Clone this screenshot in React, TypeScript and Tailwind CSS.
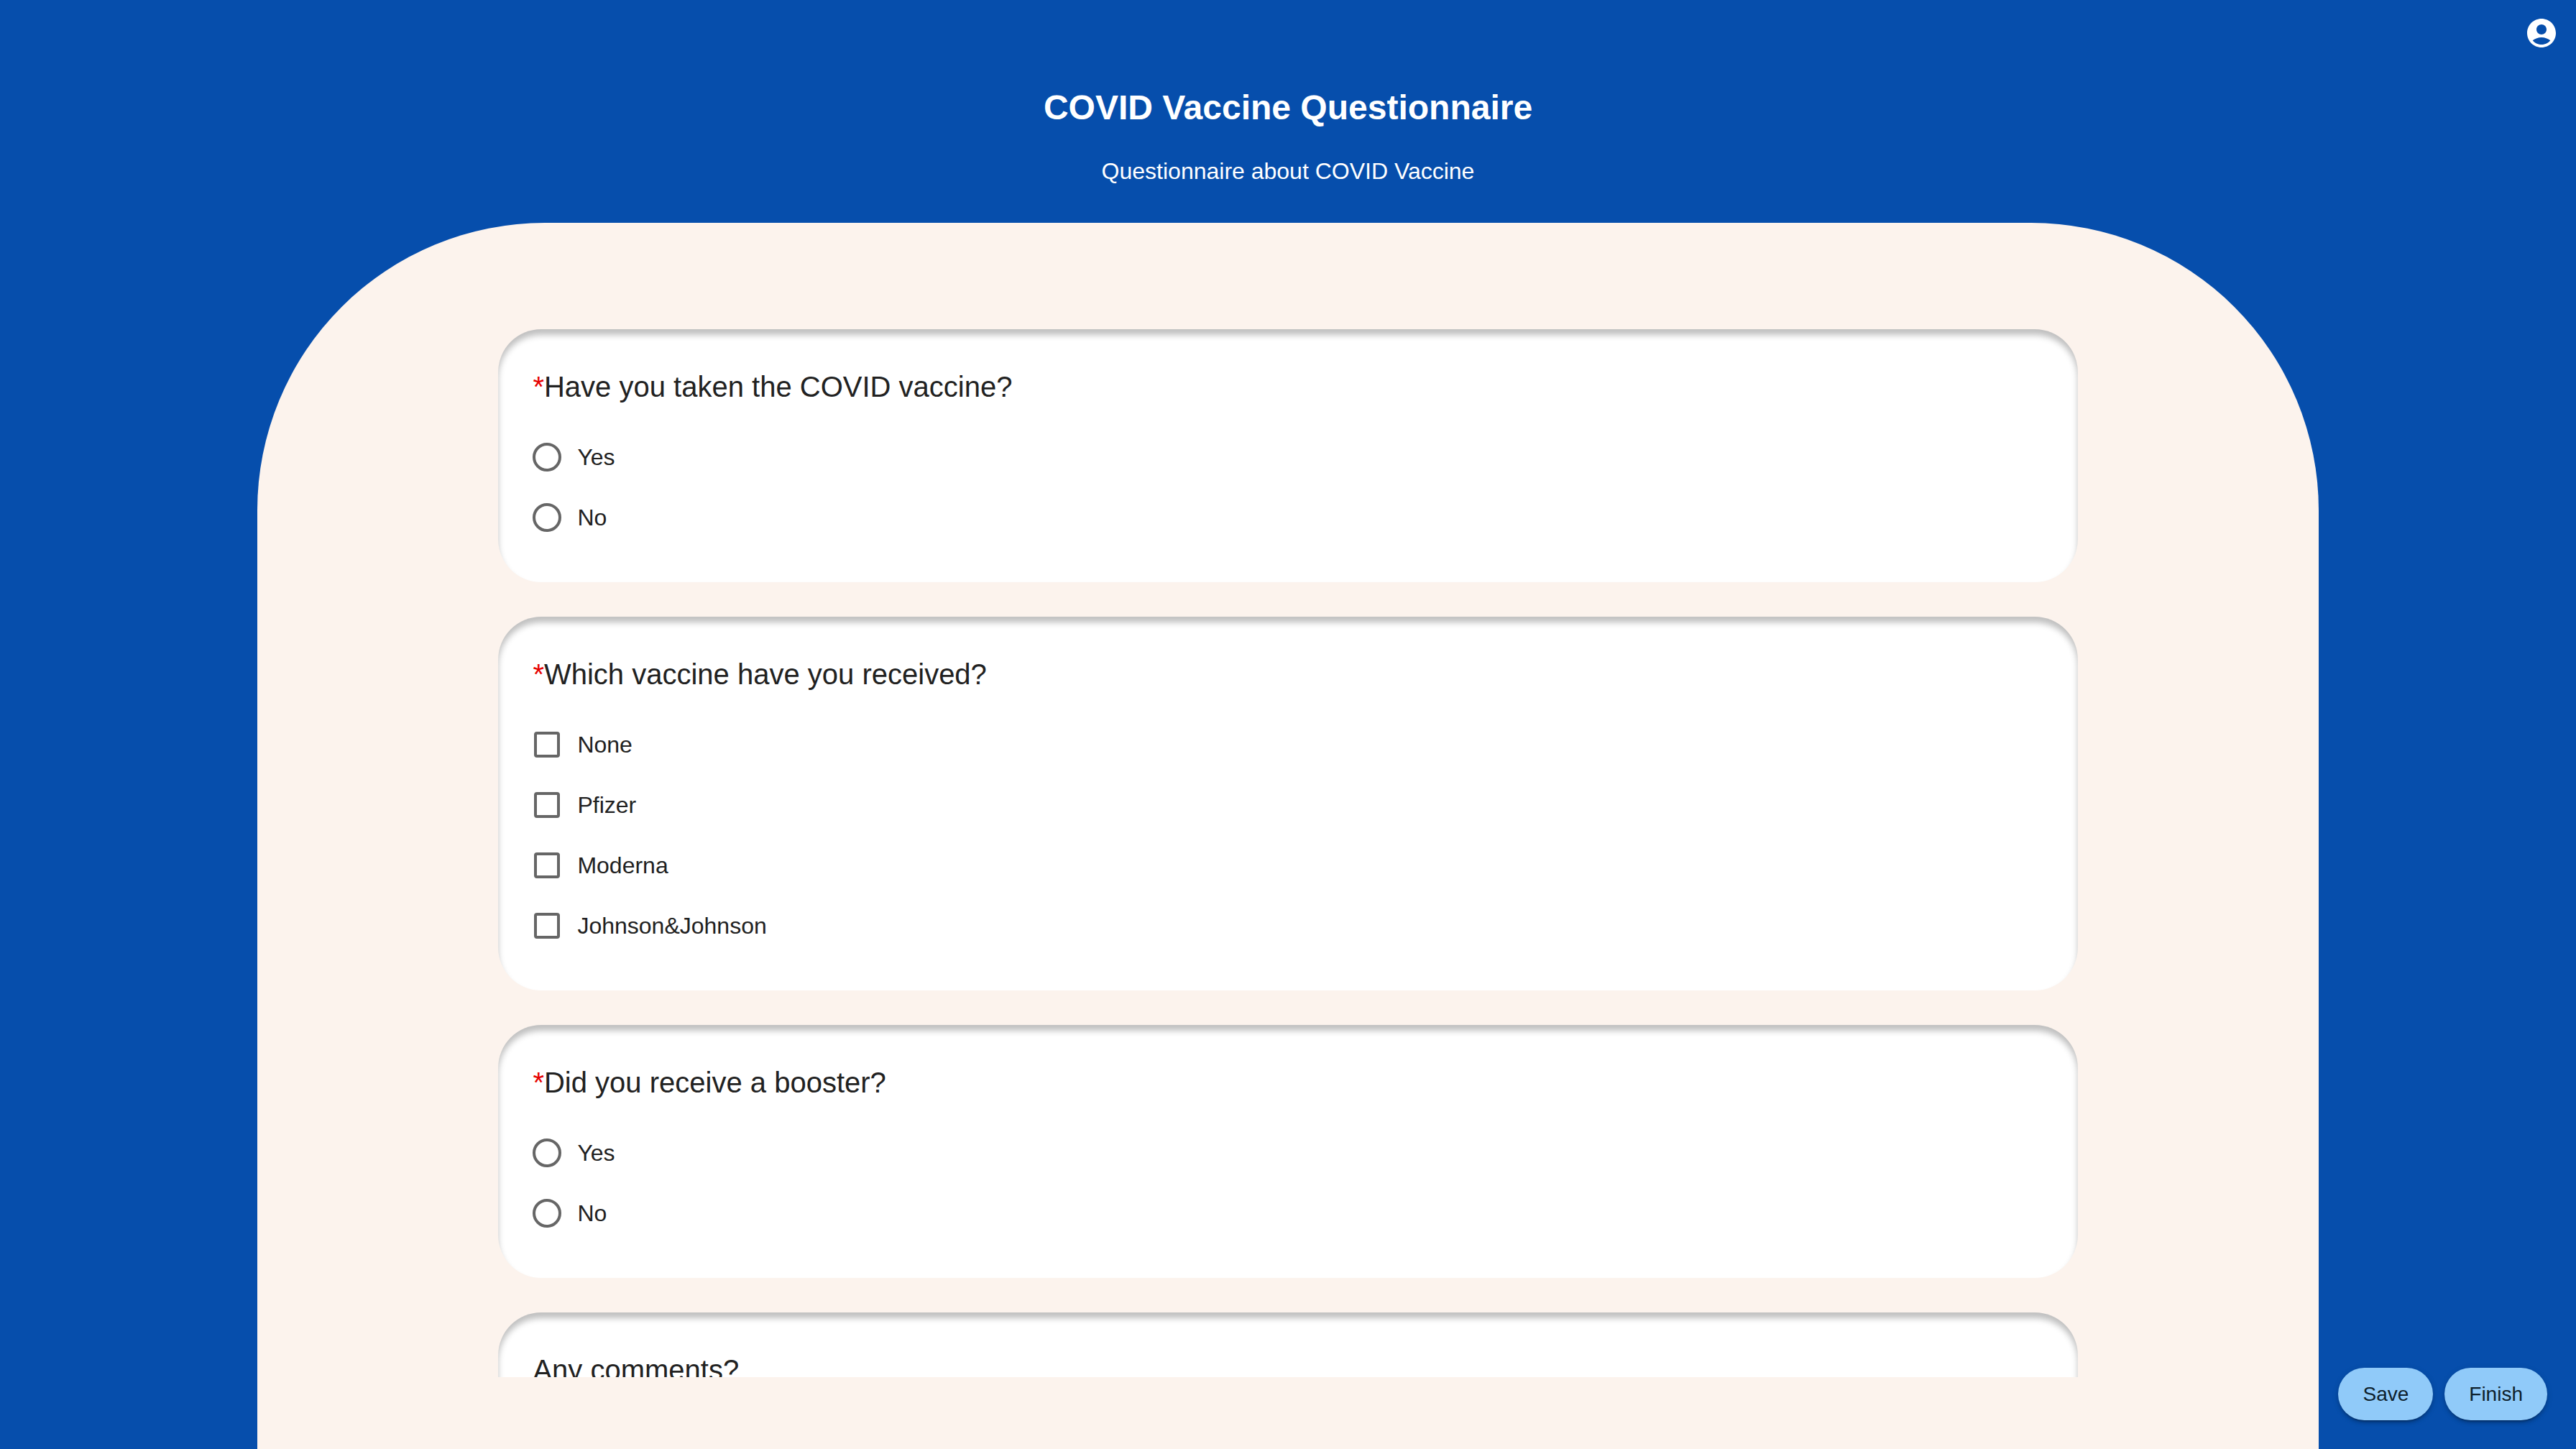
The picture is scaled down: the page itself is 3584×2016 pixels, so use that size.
import React from "react";

type Question = {
  id: string;
  title: string;
  required?: boolean;
  kind: "radio" | "checkbox" | "text";
  options?: string[];
};

const questions: Question[] = [
  { id: "taken", title: "Have you taken the COVID vaccine?", required: true, kind: "radio", options: ["Yes", "No"] },
  {
    id: "which",
    title: "Which vaccine have you received?",
    required: true,
    kind: "checkbox",
    options: ["None", "Pfizer", "Moderna", "Johnson&Johnson"],
  },
  { id: "booster", title: "Did you receive a booster?", required: true, kind: "radio", options: ["Yes", "No"] },
  { id: "comments", title: "Any comments?", kind: "text" },
];

function AccountIcon() {
  return (
    <svg viewBox="0 0 24 24" className="size-12" fill="currentColor" aria-hidden="true">
      <path d="M12 2C6.48 2 2 6.48 2 12s4.48 10 10 10 10-4.48 10-10S17.52 2 12 2m0 4c1.93 0 3.5 1.57 3.5 3.5S13.93 13 12 13s-3.5-1.57-3.5-3.5S10.07 6 12 6m0 14c-2.03 0-4.43-.82-6.14-2.88C7.55 15.8 9.68 15 12 15s4.45.8 6.14 2.12C16.43 19.18 14.03 20 12 20" />
    </svg>
  );
}

function Option({ name, kind, label }: { name: string; kind: "radio" | "checkbox"; label: string }) {
  const shape =
    kind === "radio"
      ? "size-10 rounded-full checked:bg-[#1976d2]"
      : "size-9 rounded-[4px] checked:bg-[#1976d2]";
  return (
    <label className="flex h-[84px] w-fit items-center gap-[18px] text-[32px] leading-[48px]">
      <span className="flex size-12 items-center justify-center">
        <input type={kind} name={name} value={label} className={`appearance-none border-4 border-[#666666] ${shape}`} />
      </span>
      {label}
    </label>
  );
}

function QuestionCard({ q }: { q: Question }) {
  return (
    <fieldset
      aria-labelledby={q.id}
      className="shrink-0 rounded-[60px] bg-white p-12 text-[#212121] shadow-[inset_0_8px_8px_0_rgba(0,0,0,0.25)]"
    >
      <h2 id={q.id} className="mb-6 text-[40px] leading-[64px]">
        {q.required && <span className="text-[#e60000]">*</span>}
        {q.title}
      </h2>
      {q.kind === "text" ? (
        <textarea aria-labelledby={q.id} rows={3} className="w-full rounded-lg border-2 border-[#c4c4c4] p-4 text-[32px]" />
      ) : (
        <div className="-ml-1 flex flex-col">
          {q.options?.map((o) => (
            <Option key={o} name={q.id} kind={q.kind as "radio" | "checkbox"} label={o} />
          ))}
        </div>
      )}
    </fieldset>
  );
}

function ActionButton({ children }: { children: React.ReactNode }) {
  return (
    <button
      type="button"
      className="rounded-full bg-[#90caf9] px-[34px] py-3 text-[28px] leading-[49px] text-[#0e1f2c] shadow-[0_6px_2px_-4px_rgba(0,0,0,0.2),0_4px_4px_0_rgba(0,0,0,0.14),0_2px_10px_0_rgba(0,0,0,0.12)]"
    >
      {children}
    </button>
  );
}

export default function App() {
  return (
    <div className="relative flex h-screen flex-col overflow-hidden bg-[#064eac] font-['Liberation_Sans',Arial,sans-serif]">
      <header className="flex shrink-0 flex-col items-center pt-[114px] pb-[42px] text-white">
        <h1 className="text-[48px] leading-[72px] font-bold">COVID Vaccine Questionnaire</h1>
        <p className="mt-[22px] text-[32px] leading-[60px]">Questionnaire about COVID Vaccine</p>
      </header>
      <button type="button" aria-label="Account" className="absolute top-[22px] right-6 text-white">
        <AccountIcon />
      </button>
      <main className="mx-auto flex min-h-0 w-4/5 flex-1 flex-col rounded-t-[400px] bg-[#fcf3ed] px-[335px] pt-[148px] pb-[100px]">
        <form className="flex min-h-0 flex-1 flex-col gap-12 overflow-hidden">
          {questions.map((q) => (
            <QuestionCard key={q.id} q={q} />
          ))}
        </form>
      </main>
      <div className="absolute right-10 bottom-10 flex gap-4">
        <ActionButton>Save</ActionButton>
        <ActionButton>Finish</ActionButton>
      </div>
    </div>
  );
}
